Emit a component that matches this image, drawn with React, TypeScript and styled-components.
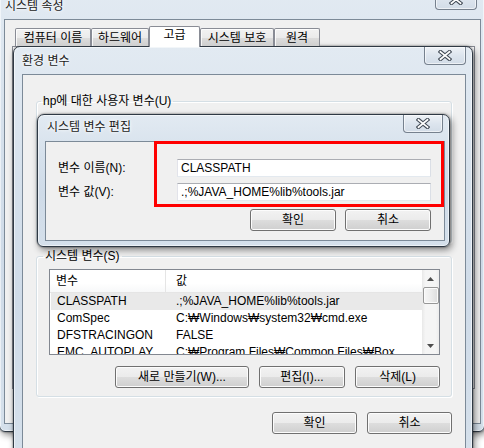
import React from "react";
import styled, { createGlobalStyle } from "styled-components";

const Global = createGlobalStyle`
  html, body { margin: 0; padding: 0; background: #fff; }
  body {
    font-family: "Liberation Sans", "Noto Sans CJK KR", sans-serif;
    font-size: 12px;
    color: #000;
  }
  * { box-sizing: border-box; }
`;

const Stage = styled.div`
  position: relative;
  width: 484px;
  height: 448px;
  overflow: hidden;
  background: #fff;
`;

type FrameProps = {
  $x: number; $y: number; $w: number; $h: number;
  $pl: number; $pr: number; $pb: number;
};

const Frame = styled.div<FrameProps>`
  position: absolute;
  left: ${(p) => p.$x}px;
  top: ${(p) => p.$y}px;
  width: ${(p) => p.$w}px;
  height: ${(p) => p.$h}px;
  display: flex;
  flex-direction: column;
  padding: 0 ${(p) => p.$pr}px ${(p) => p.$pb}px ${(p) => p.$pl}px;
  border: 1px solid #2f3944;
  border-radius: 7px 7px 6px 6px;
  background: linear-gradient(180deg, #e2eaf2 0%, #d6e1ec 30%, #cfdbe8 60%, #d5e0eb 100%);
  box-shadow: inset 0 0 0 1px rgba(255, 255, 255, 0.55), 0 0 2px rgba(0, 0, 0, 0.6),
    2px 3px 7px rgba(0, 0, 0, 0.45);
`;

const TitleBar = styled.div<{ $h: number; $pt: number; $pl: number }>`
  flex: none;
  height: ${(p) => p.$h}px;
  padding-top: ${(p) => p.$pt}px;
  padding-left: ${(p) => p.$pl}px;
  line-height: 13px;
  font-size: 12px;
  color: #1b1b1b;
  text-shadow: 0 0 5px #fff, 0 0 3px #fff;
  white-space: nowrap;
`;

const CloseBtn = styled.div<{ $w: number; $h: number; $r: number }>`
  position: absolute;
  top: 0;
  right: ${(p) => p.$r}px;
  width: ${(p) => p.$w}px;
  height: ${(p) => p.$h}px;
  display: flex;
  align-items: center;
  justify-content: center;
  border: 1px solid #76818e;
  border-top: none;
  border-radius: 0 0 4px 4px;
  background: linear-gradient(180deg, #eef2f6 0%, #dde5ee 50%, #d2dce7 100%);
  box-shadow: inset 0 0 0 1px rgba(255, 255, 255, 0.6);
`;

const Client = styled.div`
  flex: 1;
  min-height: 0;
  display: flex;
  flex-direction: column;
  background: #f0f0f0;
  border: 1px solid #7c8a98;
  overflow: hidden;
`;

/* outer window */
const OuterClient = styled(Client)`
  padding: 6px 5px 34px 7px;
`;

const TabRow = styled.div`
  position: relative;
  z-index: 1;
  display: flex;
  align-items: flex-end;
  height: 21px;
  margin: 0 0 -1px 3px;
`;

const Tab = styled.div<{ $w: number; $active?: boolean }>`
  width: ${(p) => p.$w}px;
  height: ${(p) => (p.$active ? 21 : 18)}px;
  margin-bottom: ${(p) => (p.$active ? 0 : 1)}px;
  padding-top: ${(p) => (p.$active ? 1 : 2)}px;
  border: 1px solid #898c95;
  border-bottom: none;
  border-radius: 2px 2px 0 0;
  background: ${(p) =>
    p.$active ? "#fff" : "linear-gradient(180deg, #f2f2f2 0%, #ebebeb 50%, #dddddd 51%, #cfcfcf 100%)"};
  text-align: center;
  line-height: 14px;
  white-space: nowrap;
  box-shadow: inset 1px 1px 0 rgba(255, 255, 255, 0.8);
`;

const TabPanel = styled.div`
  flex: 1;
  background: #fff;
  border: 1px solid #898c95;
`;

/* env window */
const EnvClient = styled(Client)`
  padding: 19px 13px 0 13px;
`;

const Group = styled.fieldset<{ $h: number; $mt?: number }>`
  margin: ${(p) => p.$mt ?? 0}px 0 0 0;
  height: ${(p) => p.$h}px;
  padding: 6px 11px 8px 12px;
  border: 1px solid #d5dfe5;
  border-radius: 3px;
  box-shadow: inset 1px 1px 0 #fff, 1px 1px 0 #fff;
  display: flex;
  flex-direction: column;
  min-width: 0;
`;

const Legend = styled.legend<{ $shift: number }>`
  padding: 0 2px;
  margin-left: ${(p) => p.$shift}px;
  line-height: 14px;
  font-size: 12px;
  white-space: nowrap;
`;

const ListView = styled.div`
  height: 86px;
  display: flex;
  background: #fff;
  border: 1px solid #828790;
`;

const ListBody = styled.div`
  flex: 1;
  min-width: 0;
  overflow: hidden;
`;

const HeaderRow = styled.div`
  display: grid;
  grid-template-columns: 116px 1fr;
  height: 23px;
  border-bottom: 1px solid #e5e5e5;
  background: linear-gradient(180deg, #ffffff 0%, #ffffff 60%, #f7f8f9 100%);
`;

const HeaderCell = styled.div<{ $divider?: boolean }>`
  padding: 4px 0 0 ${(p) => (p.$divider ? 6 : 10)}px;
  line-height: 15px;
  border-right: ${(p) => (p.$divider ? "1px solid #e5e5e5" : "none")};
  white-space: nowrap;
`;

const Row = styled.div<{ $selected?: boolean }>`
  display: grid;
  grid-template-columns: 116px 1fr;
  height: 17px;
  line-height: 17px;
  margin-left: 1px;
  background: ${(p) => (p.$selected ? "#e9e9e9" : "transparent")};
  white-space: nowrap;
`;

const Cell = styled.div<{ $first?: boolean }>`
  padding-left: ${(p) => (p.$first ? 6 : 9)}px;
  overflow: hidden;
`;

const ScrollBar = styled.div`
  flex: none;
  width: 17px;
  display: flex;
  flex-direction: column;
  background: linear-gradient(90deg, #e8e8e8 0%, #f5f5f5 20%, #f5f5f5 80%, #ededed 100%);
`;

const ScrollArrow = styled.div`
  height: 17px;
  display: flex;
  align-items: center;
  justify-content: center;
`;

const ScrollThumb = styled.div`
  height: 17px;
  margin: 0 0 0 1px;
  border: 1px solid #979797;
  border-radius: 2px;
  background: linear-gradient(90deg, #f6f6f6 0%, #ececec 50%, #dcdcdc 100%);
  box-shadow: inset 0 0 0 1px #fbfbfb;
`;

const ScrollSpace = styled.div`
  flex: 1;
`;

const ButtonRow = styled.div<{ $mt: number; $gap: number }>`
  display: flex;
  justify-content: flex-end;
  gap: ${(p) => p.$gap}px;
  margin-top: ${(p) => p.$mt}px;
`;

const Button = styled.div<{ $w: number }>`
  width: ${(p) => p.$w}px;
  height: 22px;
  display: flex;
  align-items: center;
  justify-content: center;
  border: 1px solid #707070;
  border-radius: 3px;
  background: linear-gradient(180deg, #f2f2f2 0%, #ebebeb 50%, #dddddd 51%, #cfcfcf 100%);
  box-shadow: inset 0 0 0 1px #fcfcfc;
  white-space: nowrap;
  line-height: 14px;
`;

/* edit dialog */
const EditClient = styled(Client)`
  padding: 17px 13px 0 12px;
`;

const FieldRow = styled.div<{ $mt?: number }>`
  display: flex;
  align-items: center;
  margin-top: ${(p) => p.$mt ?? 0}px;
`;

const FieldLabel = styled.div`
  width: 119px;
  white-space: nowrap;
  line-height: 14px;
`;

const Input = styled.div`
  flex: 1;
  height: 18px;
  padding-left: 3px;
  line-height: 16px;
  background: #fff;
  border: 1px solid;
  border-color: #abadb3 #dbdfe6 #e3e9ef #e2e3ea;
  white-space: nowrap;
  overflow: hidden;
`;

const Annotation = styled.div`
  position: absolute;
  left: 154px;
  top: 141px;
  width: 290px;
  height: 66px;
  border: 3px solid #ff0000;
`;

const CloseGlyph = () => (
  <svg width="14" height="11" viewBox="0 0 14 11">
    <path d="M2.5 1.8 L11.5 9.2 M11.5 1.8 L2.5 9.2" stroke="#434c57" strokeWidth="3.8" strokeLinecap="square" fill="none" />
    <path d="M2.5 1.8 L11.5 9.2 M11.5 1.8 L2.5 9.2" stroke="#ffffff" strokeWidth="1.7" strokeLinecap="square" fill="none" />
  </svg>
);

const Arrow = ({ up }: { up?: boolean }) => (
  <svg width="7" height="4" viewBox="0 0 7 4">
    <path d={up ? "M0 4 L3.5 0 L7 4 Z" : "M0 0 L7 0 L3.5 4 Z"} fill="#4d4d4d" />
  </svg>
);

const systemVars = [
  { name: "CLASSPATH", value: ".;%JAVA_HOME%lib%tools.jar", selected: true },
  { name: "ComSpec", value: "C:₩Windows₩system32₩cmd.exe" },
  { name: "DFSTRACINGON", value: "FALSE" },
  { name: "EMC_AUTOPLAY", value: "C:₩Program Files₩Common Files₩Box" },
];

const tabs = [
  { label: "컴퓨터 이름", w: 76 },
  { label: "하드웨어", w: 58 },
  { label: "고급", w: 51, active: true },
  { label: "시스템 보호", w: 74 },
  { label: "원격", w: 46 },
];

export default function App() {
  return (
    <Stage>
      <Global />

      {/* 시스템 속성 */}
      <Frame $x={-1} $y={-12} $w={486} $h={444} $pl={4} $pr={3} $pb={7}>
        <TitleBar $h={30} $pt={11} $pl={1}>시스템 속성</TitleBar>
        <CloseBtn $w={42} $h={21} $r={7}>
          <CloseGlyph />
        </CloseBtn>
        <OuterClient>
          <TabRow>
            {tabs.map((t) => (
              <Tab key={t.label} $w={t.w} $active={t.active}>
                {t.label}
              </Tab>
            ))}
          </TabRow>
          <TabPanel />
        </OuterClient>
      </Frame>

      {/* 환경 변수 */}
      <Frame $x={13} $y={46} $w={460} $h={420} $pl={8} $pr={6} $pb={7}>
        <TitleBar $h={27} $pt={8} $pl={0}>환경 변수</TitleBar>
        <CloseBtn $w={42} $h={18} $r={6}>
          <CloseGlyph />
        </CloseBtn>
        <EnvClient>
          <Group $h={149}>
            <Legend $shift={-8}>hp에 대한 사용자 변수(U)</Legend>
          </Group>
          <Group $h={148} $mt={6}>
            <Legend $shift={-6}>시스템 변수(S)</Legend>
            <ListView>
              <ListBody>
                <HeaderRow>
                  <HeaderCell $divider>변수</HeaderCell>
                  <HeaderCell>값</HeaderCell>
                </HeaderRow>
                {systemVars.map((v) => (
                  <Row key={v.name} $selected={v.selected}>
                    <Cell $first>{v.name}</Cell>
                    <Cell>{v.value}</Cell>
                  </Row>
                ))}
              </ListBody>
              <ScrollBar>
                <ScrollArrow>
                  <Arrow up />
                </ScrollArrow>
                <ScrollThumb />
                <ScrollSpace />
                <ScrollArrow>
                  <Arrow />
                </ScrollArrow>
              </ScrollBar>
            </ListView>
            <ButtonRow $mt={11} $gap={10}>
              <Button $w={134}>새로 만들기(W)...</Button>
              <Button $w={86}>편집(I)...</Button>
              <Button $w={85}>삭제(L)</Button>
            </ButtonRow>
          </Group>
          <ButtonRow $mt={15} $gap={10}>
            <Button $w={85}>확인</Button>
            <Button $w={85}>취소</Button>
          </ButtonRow>
        </EnvClient>
      </Frame>

      {/* 시스템 변수 편집 */}
      <Frame $x={37} $y={114} $w={413} $h={133} $pl={7} $pr={4} $pb={5}>
        <TitleBar $h={26} $pt={6} $pl={2}>시스템 변수 편집</TitleBar>
        <CloseBtn $w={40} $h={18} $r={6}>
          <CloseGlyph />
        </CloseBtn>
        <EditClient>
          <FieldRow>
            <FieldLabel>변수 이름(N):</FieldLabel>
            <Input>CLASSPATH</Input>
          </FieldRow>
          <FieldRow $mt={6}>
            <FieldLabel>변수 값(V):</FieldLabel>
            <Input>.;%JAVA_HOME%lib%tools.jar</Input>
          </FieldRow>
          <ButtonRow $mt={8} $gap={9}>
            <Button $w={86}>확인</Button>
            <Button $w={86}>취소</Button>
          </ButtonRow>
        </EditClient>
      </Frame>

      <Annotation />
    </Stage>
  );
}
